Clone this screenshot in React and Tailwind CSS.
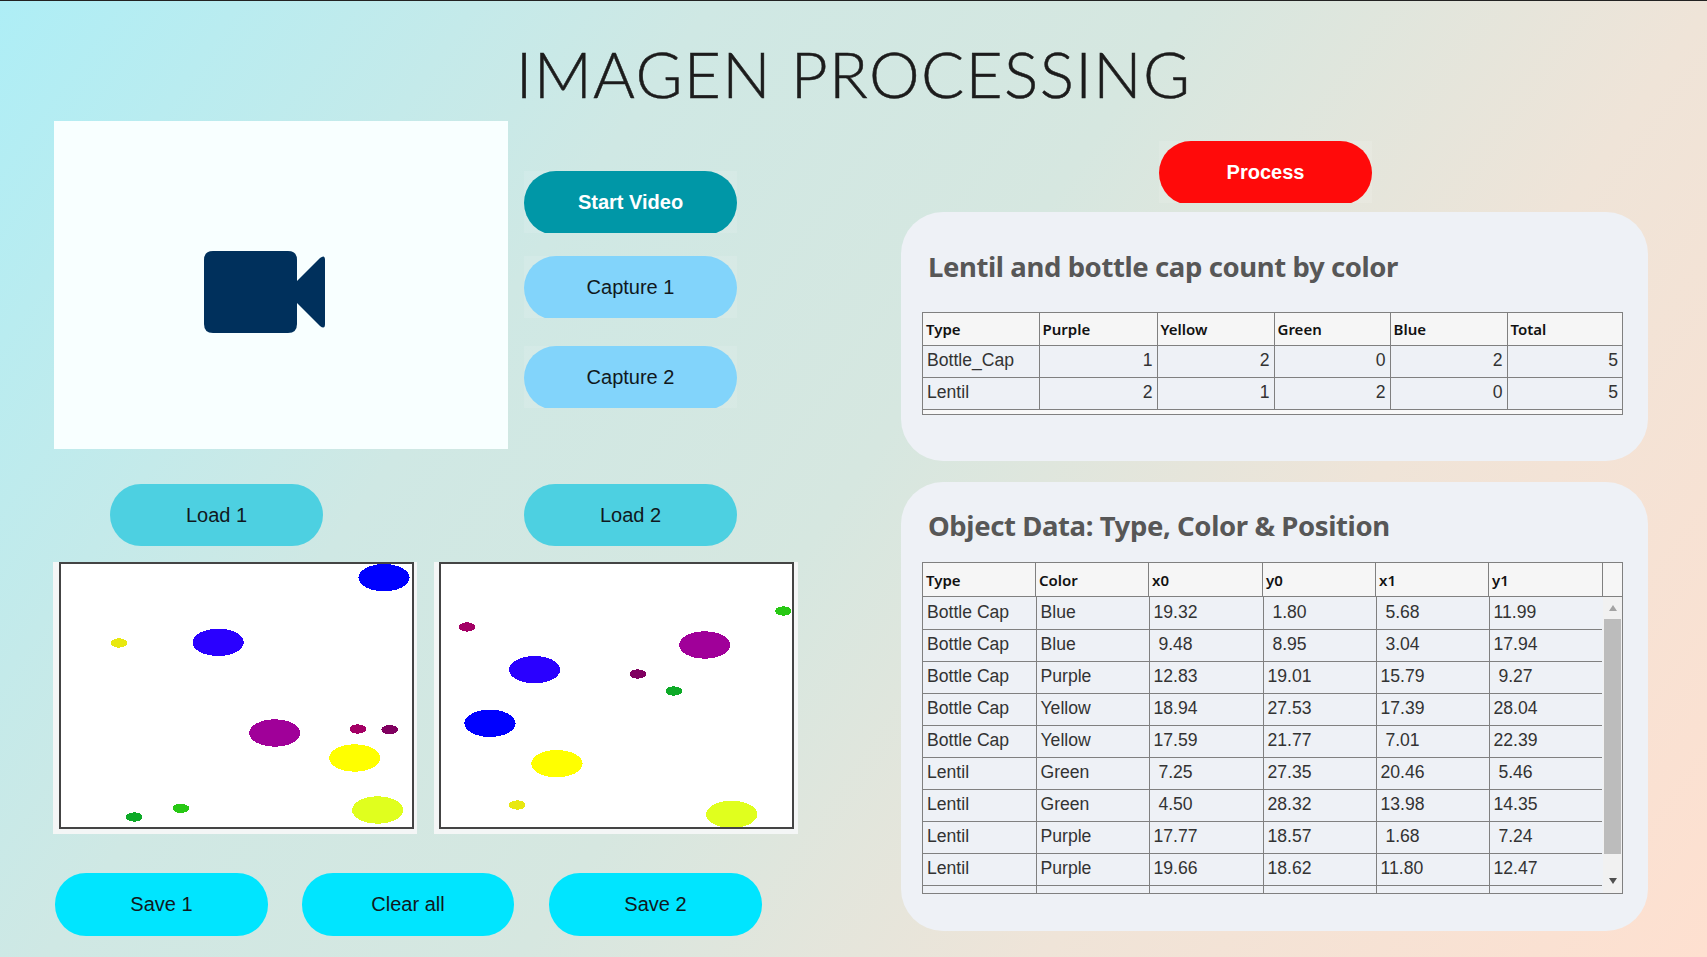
const sans = "font-['Liberation_Sans',Arial,sans-serif]";

const img1 = [
  [1034, 84, 77, 41, "#0000ff"],
  [238, 280, 25, 14, "#e8e810"],
  [536, 278, 77, 41, "#2a00ff"],
  [706, 550, 77, 41, "#a00099"],
  [955, 538, 25, 14, "#a30065"],
  [1051, 540, 25, 14, "#800060"],
  [946, 625, 77, 41, "#ffff00"],
  [1015, 781, 77, 41, "#e0ff1e"],
  [424, 776, 25, 14, "#28c814"],
  [284, 802, 25, 14, "#0eaa28"],
];

const img2 = [
  [1077, 184, 25, 14, "#28c814"],
  [127, 232, 25, 14, "#a30065"],
  [841, 286, 77, 41, "#a00099"],
  [330, 360, 77, 41, "#2a00ff"],
  [640, 373, 25, 14, "#800060"],
  [748, 424, 25, 14, "#0eaa28"],
  [196, 521, 77, 41, "#0000ff"],
  [397, 642, 77, 41, "#ffff00"],
  [278, 766, 25, 14, "#e8e810"],
  [922, 794, 77, 41, "#e0ff1e"],
];

const objects = [
  ["Bottle Cap", "Blue", "19.32", " 1.80", " 5.68", "11.99"],
  ["Bottle Cap", "Blue", " 9.48", " 8.95", " 3.04", "17.94"],
  ["Bottle Cap", "Purple", "12.83", "19.01", "15.79", " 9.27"],
  ["Bottle Cap", "Yellow", "18.94", "27.53", "17.39", "28.04"],
  ["Bottle Cap", "Yellow", "17.59", "21.77", " 7.01", "22.39"],
  ["Lentil", "Green", " 7.25", "27.35", "20.46", " 5.46"],
  ["Lentil", "Green", " 4.50", "28.32", "13.98", "14.35"],
  ["Lentil", "Purple", "17.77", "18.57", " 1.68", " 7.24"],
  ["Lentil", "Purple", "19.66", "18.62", "11.80", "12.47"],
  ["Lentil", "Yellow", " 6.52", " 9.09", " 1.60", "20.85"],
];

function Pill({ className, wrap, children }) {
  return (
    <div className={`w-[213px] h-[62px] overflow-hidden bg-white/10 ${wrap || ""}`}>
      <button className={`w-full h-[64px] rounded-[32px] text-[20px] ${sans} ${className}`}>
        <span className="relative -top-[1px]">{children}</span>
      </button>
    </div>
  );
}

function SaveBtn({ children, className }) {
  return (
    <button className={`h-[63px] pb-[2px] rounded-[31px] bg-[#00e5ff] text-[20px] text-[#101820] ${sans} ${className}`}>
      {children}
    </button>
  );
}

function Shot({ viewBox, dots, className }) {
  return (
    <div className={`w-[364px] h-[272px] bg-[#f4f6f6] pb-[5px] ${className}`}>
      <svg viewBox={viewBox} className="block w-full h-full bg-white border-2 border-[#444]" preserveAspectRatio="none" shapeRendering="crispEdges">
        {dots.map((d, i) => (
          <ellipse key={i} cx={d[0]} cy={d[1]} rx={d[2]} ry={d[3]} fill={d[4]} />
        ))}
      </svg>
    </div>
  );
}

function HeadCell({ children, className }) {
  return (
    <th className={`border-r border-[#808080] bg-[#f6f6f6] text-left align-middle pl-[3px] pt-[1px] text-[15px] font-semibold text-[#111] font-['Noto_Sans',sans-serif] ${className || ""}`}>
      {children}
    </th>
  );
}

function CountTable() {
  const head = ["Type", "Purple", "Yellow", "Green", "Blue", "Total"];
  const rows = [
    ["Bottle_Cap", 1, 2, 0, 2, 5],
    ["Lentil", 2, 1, 2, 0, 5],
  ];
  return (
    <div className="w-[701px] h-[103px] border border-[#808080] bg-[#f8f8f8] overflow-hidden">
      <table className={`w-full table-fixed border-collapse ${sans}`}>
        <colgroup>
          <col className="w-[116px]" />
          <col className="w-[118px]" />
          <col className="w-[117px]" />
          <col className="w-[116px]" />
          <col className="w-[117px]" />
          <col />
        </colgroup>
        <thead>
          <tr className="h-[32px] border-b border-[#808080]">
            {head.map((h) => (
              <HeadCell key={h} className="last:border-r-0">{h}</HeadCell>
            ))}
          </tr>
        </thead>
        <tbody>
          {rows.map((r) => (
            <tr key={r[0]} className="h-[32px] border-b border-[#808080] bg-[#eef1f6]">
              {r.map((c, i) => (
                <td key={i} className={`border-r border-[#808080] last:border-r-0 text-[17.6px] text-[#333] px-[4px] pb-[1px] ${i === 0 ? "text-left" : "text-right"}`}>
                  {c}
                </td>
              ))}
            </tr>
          ))}
        </tbody>
      </table>
    </div>
  );
}

function ObjectTable() {
  const head = ["Type", "Color", "x0", "y0", "x1", "y1"];
  return (
    <div className={`w-[701px] h-[332px] border border-[#808080] overflow-hidden flex flex-col ${sans}`}>
      <div className="flex h-[34px] shrink-0 border-b border-[#808080] bg-[#f6f6f6]">
        {head.map((h, i) => (
          <div key={h} className={`flex items-center border-r border-[#808080] pl-[3px] pt-[1px] text-[15px] font-semibold text-[#111] font-['Noto_Sans',sans-serif] ${i === 2 || i === 5 ? "w-[114px]" : "w-[113px]"}`}>
            {h}
          </div>
        ))}
      </div>
      <div className="flex flex-1 min-h-0">
        <div className="w-[680px] overflow-hidden">
          <table className="w-full table-fixed border-collapse">
            <colgroup>
              <col className="w-[113px]" />
              <col className="w-[113px]" />
              <col className="w-[114px]" />
              <col className="w-[113px]" />
              <col className="w-[113px]" />
              <col />
            </colgroup>
            <tbody>
              {objects.map((r, n) => (
                <tr key={n} className="h-[32px] border-b border-[#808080]">
                  {r.map((c, i) => (
                    <td key={i} className="border-r border-[#808080] last:border-r-0 pl-[4px] pb-[2px] text-[17.6px] text-[#333] whitespace-pre">
                      {c}
                    </td>
                  ))}
                </tr>
              ))}
            </tbody>
          </table>
        </div>
        <div className="w-[19px] ml-[1px] flex flex-col items-center bg-[#f1f1f1]">
          <div className="h-[22px] flex items-center justify-center">
            <div className="w-0 h-0 border-x-[4px] border-x-transparent border-b-[6px] border-b-[#a3a3a3]" />
          </div>
          <div className="w-[17px] h-[235px] bg-[#bcbcbc]" />
          <div className="flex-1 flex items-end pb-[9px]">
            <div className="w-0 h-0 border-x-[4px] border-x-transparent border-t-[6px] border-t-[#505050]" />
          </div>
        </div>
      </div>
    </div>
  );
}

function Card({ title, className, children }) {
  return (
    <section className={`w-[747px] rounded-[42px] bg-[#eef1f6] pl-[21px] ${className}`}>
      <h2 className="pl-[6px] text-[27.5px] leading-[36px] font-bold text-[#575757] tracking-[-0.4px] font-['Noto_Sans',sans-serif]">
        {title}
      </h2>
      {children}
    </section>
  );
}

export default function App() {
  return (
    <div className="w-[1707px] h-[957px] overflow-hidden border-t border-[#222] bg-[linear-gradient(125deg,#aeeef6_0%,#cfe8e4_30%,#d6e7e0_50%,#efe4d8_72%,#fee0d0_100%)]">
      <h1 className="h-[120px] pt-[35px] text-center text-[64px] leading-[76px] tracking-[1.35px] font-light text-[#1c1c1c] [-webkit-text-stroke:0.5px_#1c1c1c] font-['Lato',sans-serif]">
        IMAGEN PROCESSING
      </h1>
      <div className="flex">
        <div className="w-[847px] pl-[53px]">
          <div className="flex ml-[1px]">
            <div className="w-[454px] h-[328px] bg-[#f8ffff] flex items-center justify-center">
              <svg width="121" height="82" viewBox="0 0 121 82" className="relative top-[7px] -left-[17px]">
                <path d="M9 0H84Q93 0 93 9V73Q93 82 84 82H9Q0 82 0 73V9Q0 0 9 0Z" fill="#00305c" />
                <path d="M93 30L116 7Q121 3 121 9V73Q121 79 116 75L93 52Z" fill="#00305c" />
              </svg>
            </div>
            <div className="ml-[16px] pt-[50px] flex flex-col">
              <Pill className="bg-[#0097a7] text-white font-bold">Start Video</Pill>
              <Pill wrap="mt-[23px]" className="bg-[#82d4fb] text-[#101820]">Capture 1</Pill>
              <Pill wrap="mt-[28px]" className="bg-[#82d4fb] text-[#101820]">Capture 2</Pill>
            </div>
          </div>
          <div className="mt-[35px] flex">
            <button className={`ml-[57px] w-[213px] h-[62px] rounded-[31px] bg-[#4dd0e1] text-[20px] text-[#101820] ${sans}`}>Load 1</button>
            <button className={`ml-[201px] w-[213px] h-[62px] rounded-[31px] bg-[#4dd0e1] text-[20px] text-[#101820] ${sans}`}>Load 2</button>
          </div>
          <div className="mt-[16px] flex gap-[17px]">
            <Shot viewBox="64 43 1054 789" dots={img1} className="pl-[6px] pr-[3px]" />
            <Shot viewBox="49 43 1054 789" dots={img2} className="pl-[5px] pr-[4px]" />
          </div>
          <div className="mt-[39px] ml-[2px] flex">
            <SaveBtn className="w-[213px]">Save 1</SaveBtn>
            <SaveBtn className="ml-[34px] w-[212px]">Clear all</SaveBtn>
            <SaveBtn className="ml-[35px] w-[213px]">Save 2</SaveBtn>
          </div>
        </div>
        <div className="pl-[54px] pt-[20px]">
          <div className="ml-[258px] mb-[9px]">
            <Pill className="bg-[#ff0a0a] text-white font-bold">Process</Pill>
          </div>
          <Card title="Lentil and bottle cap count by color" className="h-[249px] pt-[37px]">
            <div className="mt-[27px]">
              <CountTable />
            </div>
          </Card>
          <Card title="Object Data: Type, Color & Position" className="mt-[21px] h-[449px] pt-[26px]">
            <div className="mt-[18px]">
              <ObjectTable />
            </div>
          </Card>
        </div>
      </div>
    </div>
  );
}
